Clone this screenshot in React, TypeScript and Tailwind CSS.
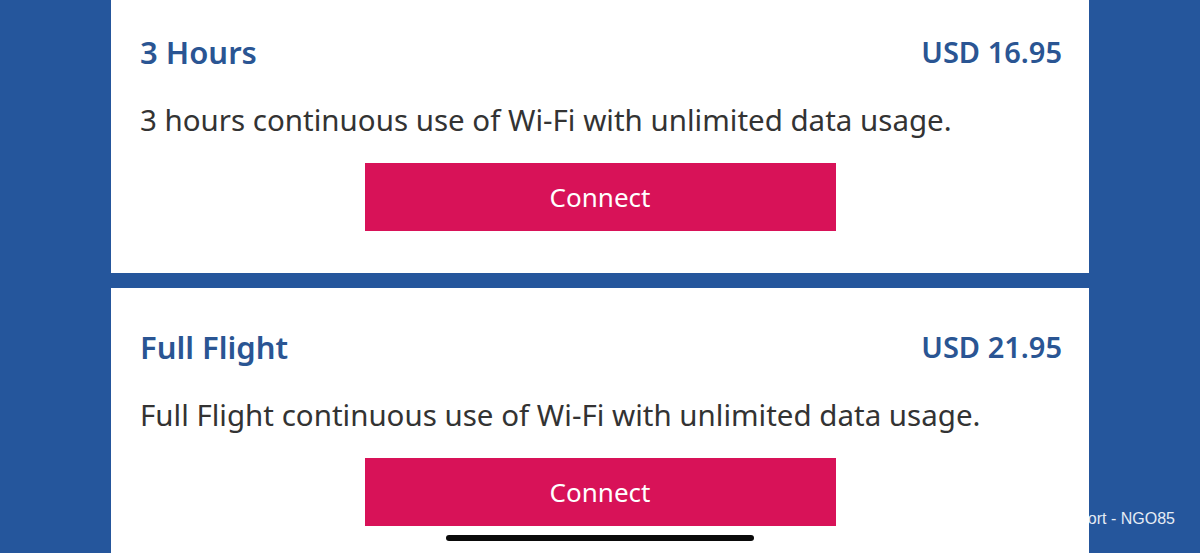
import React from 'react'

type Plan = {
  title: string
  price: string
  description: string
}

const plans: Plan[] = [
  {
    title: '3 Hours',
    price: 'USD 16.95',
    description: '3 hours continuous use of Wi-Fi with unlimited data usage.',
  },
  {
    title: 'Full Flight',
    price: 'USD 21.95',
    description: 'Full Flight continuous use of Wi-Fi with unlimited data usage.',
  },
]

function PlanCard({ plan }: { plan: Plan }) {
  return (
    <div className="bg-white h-[280px] px-[29px] pt-[39px] shrink-0">
      <div className="flex justify-between items-start">
        <h2 className="text-[31px] leading-[40px] font-semibold text-[#2a5593]">{plan.title}</h2>
        <span className="text-[29px] leading-[40px] font-semibold text-[#2a5593] mr-[-2px]">{plan.price}</span>
      </div>
      <p className="mt-[28px] text-[29.5px] leading-[40px] text-[#333333]">{plan.description}</p>
      <div className="flex justify-center mt-[23px]">
        <button className="w-[471px] h-[68px] bg-[#d81258] text-white text-[26px]">Connect</button>
      </div>
    </div>
  )
}

export default function App() {
  return (
    <div
      className="relative w-[1200px] h-[553px] overflow-hidden bg-[#25569c]"
      style={{ fontFamily: '"Noto Sans", "Open Sans", sans-serif' }}
    >
      {/* footer text mostly hidden behind the cards */}
      <span
        className="absolute right-[25px] top-[507px] text-[16px] text-[#e6ecf5]"
        style={{ fontFamily: '"Liberation Sans", Arial, sans-serif' }}
      >
        Help &amp; Support - NGO85
      </span>
      <div className="relative flex flex-col gap-[15px] w-[978px] ml-[111px] -mt-[7px]">
        {plans.map((plan) => (
          <PlanCard key={plan.title} plan={plan} />
        ))}
      </div>
      {/* home indicator */}
      <div className="absolute left-[446px] top-[535px] w-[308px] h-[6px] rounded-full bg-[#0a0a0a]" />
    </div>
  )
}
